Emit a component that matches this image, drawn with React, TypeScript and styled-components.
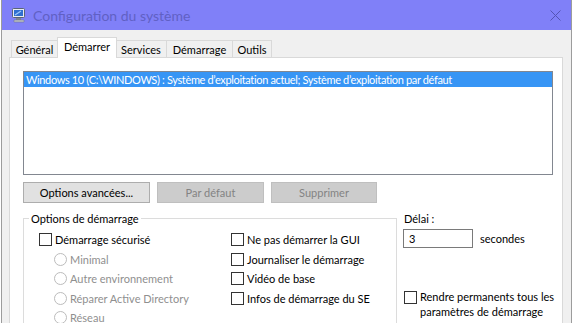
import React from "react";
import styled, { createGlobalStyle } from "styled-components";

const GlobalStyle = createGlobalStyle`
    html, body {
        margin: 0;
        padding: 0;
        background: #ffffff;
        font-family: Lato, "Noto Sans", sans-serif;
        font-size: 11px;
        color: #000000;
    }
    #root {
        width: 574px;
        height: 323px;
        overflow: hidden;
    }
`;

const StyledWindow = styled.div`
    display: flex;
    flex-direction: column;
    width: 569px;
    height: 323px;
    margin-left: 1px;
    border-left: 1px solid #9c9c9c;
    border-right: 1px solid #9c9c9c;
    background: #f0f0f0;
`;

const StyledTitleBar = styled.div`
    display: flex;
    align-items: center;
    height: 30px;
    padding: 0 10px 0 9px;
    background: #8080f8;
    flex-shrink: 0;
`;

const StyledTitle = styled.span`
    margin-left: 6px;
    font-size: 14px;
    color: #6060c4;
`;

const StyledClose = styled.svg`
    margin-left: auto;
`;

const StyledBody = styled.div`
    display: flex;
    flex-direction: column;
    flex: 1;
    padding: 7px 8px 0 7px;
`;

const StyledTabRow = styled.div`
    display: flex;
    align-items: flex-end;
    height: 20px;
    padding-left: 2px;
`;

const StyledTab = styled.div<{ $w: number; $active?: boolean; $first?: boolean }>`
    box-sizing: border-box;
    width: ${p => p.$w}px;
    height: ${p => (p.$active ? 21 : 17)}px;
    display: flex;
    align-items: center;
    justify-content: center;
    padding-bottom: ${p => (p.$active ? 3 : 0)}px;
    border-top: 1px solid #d9d9d9;
    border-right: 1px solid #d9d9d9;
    border-left: ${p => (p.$active || p.$first ? "1px solid #d9d9d9" : "none")};
    background: ${p => (p.$active ? "#ffffff" : "#f0f0f0")};
    margin: ${p => (p.$active ? "0 -1px -1px -1px" : "0")};
    position: relative;
    z-index: ${p => (p.$active ? 1 : 0)};
`;

const StyledPanel = styled.div`
    flex: 1;
    background: #ffffff;
    border: 1px solid #d9d9d9;
    border-bottom: none;
    padding: 13px 0 0 13px;
`;

const StyledListBox = styled.div`
    box-sizing: border-box;
    width: 530px;
    height: 104px;
    border: 1px solid #828790;
    background: #ffffff;
`;

const StyledListItem = styled.div<{ $selected?: boolean }>`
    height: 15px;
    line-height: 15px;
    padding-left: 2px;
    white-space: nowrap;
    letter-spacing: -0.35px;
    background: ${p => (p.$selected ? "#3795f5" : "transparent")};
    color: ${p => (p.$selected ? "#ffffff" : "#000000")};
`;

const StyledButtonRow = styled.div`
    display: flex;
    gap: 7px;
    margin-top: 7px;
`;

const StyledButton = styled.div<{ $w: number; $disabled?: boolean }>`
    box-sizing: border-box;
    width: ${p => p.$w}px;
    height: 21px;
    display: flex;
    align-items: center;
    justify-content: center;
    border: 1px solid ${p => (p.$disabled ? "#bfbfbf" : "#adadad")};
    background: ${p => (p.$disabled ? "#cccccc" : "#e1e1e1")};
    color: ${p => (p.$disabled ? "#838383" : "#000000")};
`;

const StyledLower = styled.div`
    display: flex;
    margin-top: 8px;
`;

const StyledGroup = styled.fieldset`
    box-sizing: border-box;
    width: 374px;
    height: 140px;
    margin: 0;
    padding: 4px 0 0 5px;
    border: 1px solid #dcdcdc;
    min-width: 0;
    flex-shrink: 0;
`;

const StyledLegend = styled.legend`
    padding: 0 2px;
    line-height: 15px;
`;

const StyledGrid = styled.div`
    display: grid;
    grid-template-columns: 192px auto;
    margin-left: 10px;
`;

const StyledColumn = styled.div`
    display: flex;
    flex-direction: column;
`;

const StyledOption = styled.div<{ $indent?: boolean; $disabled?: boolean }>`
    display: flex;
    align-items: center;
    height: 19.5px;
    padding-left: ${p => (p.$indent ? 15 : 0)}px;
    color: ${p => (p.$disabled ? "#8f8f8f" : "#000000")};
    white-space: nowrap;
`;

const StyledCheck = styled.span<{ $top?: number }>`
    box-sizing: border-box;
    width: 13px;
    height: 13px;
    border: 1px solid #333333;
    background: #ffffff;
    margin-right: 3px;
    margin-top: ${p => p.$top ?? 0}px;
    flex-shrink: 0;
`;

const StyledRadio = styled.span`
    box-sizing: border-box;
    width: 13px;
    height: 13px;
    border: 1px solid #bcbcbc;
    border-radius: 50%;
    background: #ffffff;
    margin-right: 3px;
    flex-shrink: 0;
`;

const StyledSide = styled.div`
    display: flex;
    flex-direction: column;
    margin-left: 6px;
`;

const StyledLabel = styled.div`
    line-height: 15px;
    padding-left: 1px;
`;

const StyledDelayRow = styled.div`
    display: flex;
    align-items: center;
    margin-top: 3px;
`;

const StyledInput = styled.div`
    box-sizing: border-box;
    width: 70px;
    height: 19px;
    border: 1px solid #7a7a7a;
    background: #ffffff;
    padding-left: 5px;
    line-height: 17px;
`;

const StyledUnit = styled.span`
    margin-left: 7px;
`;

const StyledPermanent = styled.div`
    display: flex;
    align-items: flex-start;
    margin-top: 41px;
    padding-left: 1px;
    line-height: 15px;
    white-space: nowrap;
`;

const MonitorIcon = () =>
(
    <svg width="16" height="16" viewBox="0 0 16 16">
        <rect x="1.5" y="1.5" width="12" height="9" rx="1" fill="#e8ecf2" stroke="#5a6478" />
        <rect x="3" y="3" width="9" height="6" fill="#2f6fd0" />
        <path d="M4 8 L10 4" stroke="#9cc8f8" strokeWidth="1.2" />
        <rect x="5" y="11" width="5" height="2" fill="#7c8494" />
        <rect x="3" y="13" width="10" height="2" rx="0.5" fill="#c4c8d0" stroke="#6e7684" strokeWidth="0.6" />
    </svg>
);

const App = () =>
(
    <>
        <GlobalStyle />
        <StyledWindow>
            <StyledTitleBar>
                <MonitorIcon />
                <StyledTitle>Configuration du système</StyledTitle>
                <StyledClose width="11" height="11" viewBox="0 0 11 11">
                    <path d="M0.5 0.5 L10.5 10.5 M10.5 0.5 L0.5 10.5" stroke="#5454b4" strokeWidth="1" />
                </StyledClose>
            </StyledTitleBar>
            <StyledBody>
                <StyledTabRow>
                    <StyledTab $w={47} $first>Général</StyledTab>
                    <StyledTab $w={60} $active>Démarrer</StyledTab>
                    <StyledTab $w={51}>Services</StyledTab>
                    <StyledTab $w={66}>Démarrage</StyledTab>
                    <StyledTab $w={39}>Outils</StyledTab>
                </StyledTabRow>
                <StyledPanel>
                    <StyledListBox>
                        <StyledListItem $selected>
                            Windows 10 (C:\WINDOWS) : Système d’exploitation actuel; Système d’exploitation par défaut
                        </StyledListItem>
                    </StyledListBox>
                    <StyledButtonRow>
                        <StyledButton $w={127}>Options avancées...</StyledButton>
                        <StyledButton $w={107} $disabled>Par défaut</StyledButton>
                        <StyledButton $w={106} $disabled>Supprimer</StyledButton>
                    </StyledButtonRow>
                    <StyledLower>
                        <StyledGroup>
                            <StyledLegend>Options de démarrage</StyledLegend>
                            <StyledGrid>
                                <StyledColumn>
                                    <StyledOption><StyledCheck />Démarrage sécurisé</StyledOption>
                                    <StyledOption $indent $disabled><StyledRadio />Minimal</StyledOption>
                                    <StyledOption $indent $disabled><StyledRadio />Autre environnement</StyledOption>
                                    <StyledOption $indent $disabled><StyledRadio />Réparer Active Directory</StyledOption>
                                    <StyledOption $indent $disabled><StyledRadio />Réseau</StyledOption>
                                </StyledColumn>
                                <StyledColumn>
                                    <StyledOption><StyledCheck />Ne pas démarrer la GUI</StyledOption>
                                    <StyledOption><StyledCheck />Journaliser le démarrage</StyledOption>
                                    <StyledOption><StyledCheck />Vidéo de base</StyledOption>
                                    <StyledOption><StyledCheck />Infos de démarrage du SE</StyledOption>
                                </StyledColumn>
                            </StyledGrid>
                        </StyledGroup>
                        <StyledSide>
                            <StyledLabel>Délai :</StyledLabel>
                            <StyledDelayRow>
                                <StyledInput>3</StyledInput>
                                <StyledUnit>secondes</StyledUnit>
                            </StyledDelayRow>
                            <StyledPermanent>
                                <StyledCheck $top={1.5} />
                                <span>Rendre permanents tous les<br />paramètres de démarrage</span>
                            </StyledPermanent>
                        </StyledSide>
                    </StyledLower>
                </StyledPanel>
            </StyledBody>
        </StyledWindow>
    </>
);

export default App;
